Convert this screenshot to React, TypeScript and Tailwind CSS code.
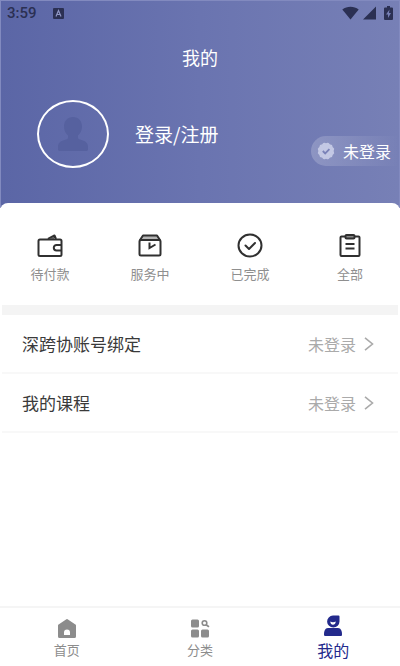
import React from "react";

const orders = [
  { label: "待付款", icon: <WalletIcon /> },
  { label: "服务中", icon: <BoxIcon /> },
  { label: "已完成", icon: <DoneIcon /> },
  { label: "全部", icon: <ClipboardIcon /> },
];

const rows = [
  { label: "深跨协账号绑定", value: "未登录" },
  { label: "我的课程", value: "未登录" },
];

function WalletIcon() {
  return (
    <svg width="26" height="26" viewBox="0 0 26 26" fill="none" stroke="#303030" strokeWidth="2" strokeLinejoin="round" aria-hidden="true">
      <path d="m11 6 6.500-3.500L19 6" />
      <path d="M12 6 16.500 4 17.500 6Z" fill="#777" stroke="none" />
      <rect x="1.500" y="6.500" width="23" height="16.500" rx="1.500" />
      <path d="M24.500 12h-5a2.700 2.700 0 0 0 0 5.400h5" />
    </svg>
  );
}

function BoxIcon() {
  return (
    <svg width="26" height="26" viewBox="0 0 26 26" fill="none" stroke="#303030" strokeWidth="2" strokeLinejoin="round" aria-hidden="true">
      <path d="M3 7 6 2.500h14L23 7Z" fill="#b5b5b5" />
      <rect x="2.500" y="7" width="21" height="15.500" rx="1.500" />
      <path d="M12.500 9.500v5.500l6-3.500" strokeLinejoin="miter" />
    </svg>
  );
}

function DoneIcon() {
  return (
    <svg width="26" height="26" viewBox="0 0 26 26" fill="none" stroke="#303030" strokeWidth="2" strokeLinecap="round" strokeLinejoin="round" aria-hidden="true">
      <ellipse cx="13" cy="12.500" rx="11.500" ry="11" />
      <path d="m8.500 12.500 3.500 3.500 6-6" />
    </svg>
  );
}

function ClipboardIcon() {
  return (
    <svg width="26" height="26" viewBox="0 0 26 26" fill="none" stroke="#303030" strokeWidth="2" strokeLinejoin="round" aria-hidden="true">
      <rect x="3.500" y="3.500" width="19" height="19.500" rx="1" />
      <rect x="8.500" y="2" width="9" height="3.500" rx="1" fill="#888" />
      <path d="M8.500 11h9M8.500 15.500h9" />
    </svg>
  );
}

function HomeIcon() {
  return (
    <svg width="24" height="24" viewBox="0 0 24 24" fill="#8c8c8c" aria-hidden="true">
      <path fillRule="evenodd" d="M12 3a1 1 0 0 1 .6.200L20.400 8.500a1 1 0 0 1 .6.900V20.500a1.500 1.500 0 0 1-1.500 1.500h-15A1.500 1.500 0 0 1 3 20.500V9.400a1 1 0 0 1 .6-.9l7.800-5.300a1 1 0 0 1 .6-.200ZM9 19h6v-2.500a3 3 0 0 0-6 0Z" />
    </svg>
  );
}

function CategoryIcon() {
  return (
    <svg width="24" height="24" viewBox="0 0 24 24" fill="#8c8c8c" aria-hidden="true">
      <rect x="3" y="3.500" width="8" height="8" rx="1.500" />
      <rect x="3" y="13.500" width="8" height="8" rx="1.500" />
      <rect x="13" y="13.500" width="8" height="8" rx="1.500" />
      <circle cx="16.500" cy="7" r="2.300" fill="none" stroke="#8c8c8c" strokeWidth="1.600" />
      <path d="m18.500 9 2 1.500" stroke="#8c8c8c" strokeWidth="1.600" strokeLinecap="round" />
    </svg>
  );
}

function MineIcon() {
  return (
    <svg width="24" height="24" viewBox="0 0 24 24" fill="#232a8c" aria-hidden="true">
      <path fillRule="evenodd" d="M12 1.500h5.500a1 1 0 0 1 1 1V7.500a6.200 6 0 1 1-6.500-6ZM9.300 7.500c0 4.300 5.400 4.300 5.400 0-1.600 1-3.800 1-5.400 0Z" />
      <path d="M7 14h10c3 0 4 3 4 6.500 0 1-.5 1.500-1.500 1.500h-15C3.500 22 3 21.500 3 20.500 3 17 4 14 7 14Z" />
    </svg>
  );
}

function VerifiedIcon() {
  return (
    <svg width="18" height="18" viewBox="0 0 18 18" aria-hidden="true">
      <g fill="#c3c8e4">
        <rect x="2.500" y="2.500" width="13" height="13" rx="2" />
        <rect x="2.500" y="2.500" width="13" height="13" rx="2" transform="rotate(30 9 9)" />
        <rect x="2.500" y="2.500" width="13" height="13" rx="2" transform="rotate(60 9 9)" />
      </g>
      <path d="m5.800 9 2.400 2.400 4.200-4.200" fill="none" stroke="#7a82b8" strokeWidth="1.800" />
    </svg>
  );
}

function StatusBar() {
  return (
    <div className="flex h-6 items-center justify-between px-1.5 text-[#2b3053]">
      <div className="flex items-center gap-4">
        <span className="font-[Roboto,sans-serif] text-[15px] font-medium leading-6">3:59</span>
        <svg width="11" height="11" viewBox="0 0 11 11" aria-hidden="true">
          <rect width="11" height="11" rx="1" fill="currentColor" />
          <path d="m3 8.500 2.500-6 2.500 6M4 6.500h3" fill="none" stroke="#8f96c4" strokeWidth="1.200" />
        </svg>
      </div>
      <div className="flex items-center gap-1" aria-hidden="true">
        <svg width="17" height="14" viewBox="0 0 17 14" fill="currentColor">
          <path d="M.300 3.500C5-.2 12-.2 16.700 3.500L8.500 13.500Z" />
        </svg>
        <svg width="13" height="14" viewBox="0 0 13 14" fill="currentColor">
          <path d="M13 .5v13H0Z" />
        </svg>
        <svg className="ml-1" width="9" height="14" viewBox="0 0 9 14" fill="currentColor">
          <path fillRule="evenodd" d="M3 0h3v1.500h2a1 1 0 0 1 1 1V13a1 1 0 0 1-1 1H1a1 1 0 0 1-1-1V2.500a1 1 0 0 1 1-1h2ZM5.500 3.500 2 8.500h2V12l3-5H5Z" />
        </svg>
      </div>
    </div>
  );
}

const App: React.FC = () => {
  return (
    <div className="flex min-h-screen flex-col bg-white font-['Noto_Sans_CJK_SC',sans-serif]">
      {/* Header */}
      <header className="border-x border-t border-[#828abf] bg-linear-to-r from-[#5b66a6] via-[#6a74b0] to-[#7780b6] pb-10">
        <StatusBar />
        <h1 className="pt-5 text-center text-lg leading-6 text-white">我的</h1>
        <div className="flex items-center pl-9 pt-[31px]">
          <div className="flex h-[68px] w-[72px] items-center justify-center rounded-[50%] border-2 border-white">
            <svg width="30" height="34" viewBox="0 0 30 34" fill="#56619f" aria-hidden="true">
              <path d="M15 0c5.500 0 9 4 9 9.500 0 4-1.600 7-4 9v2c0 1.500 1.500 2 3.500 2.500 4 1 6.500 3 6.500 7V32c0 1.500-.5 2-2 2H2c-1.500 0-2-.5-2-2v-2c0-4 2.500-6 6.500-7 2-.5 3.500-1 3.500-2.500v-2c-2.400-2-4-5-4-9C6 4 9.500 0 15 0Z" />
            </svg>
          </div>
          <button type="button" className="ml-[26px] text-[19px] leading-6 text-white">登录/注册</button>
          <div className="ml-auto mt-9 flex h-[30px] items-center gap-2 self-start rounded-l-full bg-linear-to-r from-white/20 to-white/0 pl-1.5 pr-2">
            <VerifiedIcon />
            <span className="text-base leading-6 text-white">未登录</span>
          </div>
        </div>
      </header>

      <main className="relative -mt-[5px] flex-1 rounded-t-lg bg-white">
        {/* Orders */}
        <section className="grid grid-cols-4 pb-[21px] pt-[30px]">
          {orders.map((item) => (
            <button key={item.label} type="button" className="flex flex-col items-center gap-[5px]">
              {item.icon}
              <span className="text-[13px] leading-5 text-[#8f8f8f]">{item.label}</span>
            </button>
          ))}
        </section>

        {/* Menu */}
        <nav className="mx-0.5 border-t-10 border-[#f4f4f4]">
          {rows.map((row) => (
            <a key={row.label} href="#" className="flex h-[59px] items-center border-b-2 border-[#f8f8f8] pl-5 pr-6">
              <span className="flex-1 text-[17px] leading-6 text-[#3a3a3a]">{row.label}</span>
              <span className="text-base leading-6 text-[#aaaaaa]">{row.value}</span>
              <svg className="ml-2" width="10" height="14" viewBox="0 0 10 14" fill="none" stroke="#aaaaaa" strokeWidth="1.600" aria-hidden="true">
                <path d="m1 .8 7.500 6.200L1 13.200" />
              </svg>
            </a>
          ))}
        </nav>
      </main>

      {/* Tab bar */}
      <nav className="grid h-[60px] grid-cols-3 border-t-2 border-[#f5f5f5]">
        <a href="#" className="flex flex-col items-center pt-2 text-[13px] leading-5 text-[#8c8c8c]">
          <HomeIcon />
          首页
        </a>
        <a href="#" className="flex flex-col items-center pt-2 text-[13px] leading-5 text-[#8c8c8c]">
          <CategoryIcon />
          分类
        </a>
        <a href="#" aria-current="page" className="flex flex-col items-center pt-1.5 text-base leading-6 text-[#232a8c]">
          <MineIcon />
          我的
        </a>
      </nav>
    </div>
  );
};

export default App;
